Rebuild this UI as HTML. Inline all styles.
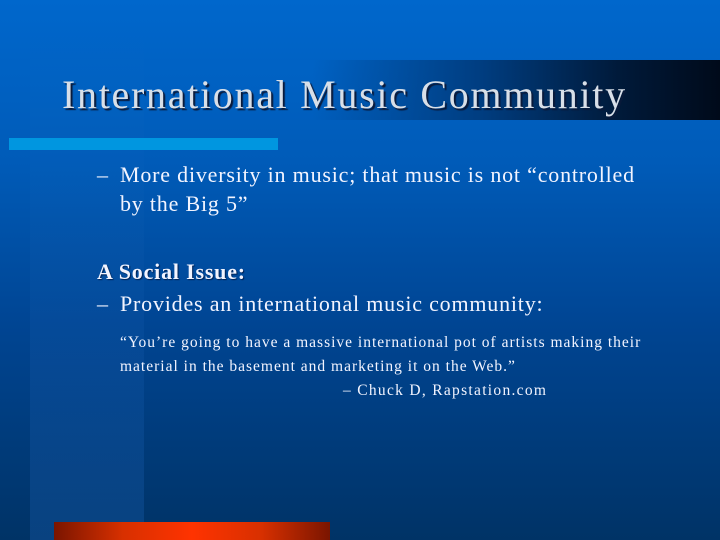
<!DOCTYPE html>
<html><head><meta charset="utf-8"><style>
html,body{margin:0;padding:0}
body{width:720px;height:540px;position:relative;overflow:hidden;background:linear-gradient(180deg,#0067cc 0%,#005bb8 30%,#004593 60%,#003366 100%);font-family:"Liberation Serif",serif;}
.strip{position:absolute;left:30px;top:0;width:114px;height:540px;background:linear-gradient(180deg,rgba(255,255,255,0) 0%,rgba(255,255,255,0.01) 40%,rgba(40,120,220,0.22) 100%);}
.bar{position:absolute;left:40px;top:60px;width:680px;height:60px;background:linear-gradient(90deg,rgba(0,102,204,0) 0%,rgba(0,102,204,0) 40%,#003d80 65%,#001a3a 85%,#000a1a 100%);}
.lb{position:absolute;left:9px;top:138px;width:269px;height:12px;background:#0096e0;}
.ob{position:absolute;left:54px;top:522px;width:276px;height:18px;background:linear-gradient(90deg,#7a1500 0%,#d83000 25%,#ff3300 50%,#d83000 75%,#7a1500 100%);}
.t{position:absolute;white-space:nowrap;color:#f2f4ff;}
.d{position:absolute;left:-23px}
h1{position:absolute;margin:0;left:62px;top:71px;font-weight:normal;font-size:40px;letter-spacing:1.7px;color:#d8dfe8;text-shadow:2px 2px 1px #0a1a3a;white-space:nowrap;}
.b{font-size:22px;letter-spacing:0.8px}
.q{font-size:15.5px;letter-spacing:1px}
</style></head><body>
<div class="strip"></div>
<div class="bar"></div>
<h1>International Music Community</h1>
<div class="lb"></div>
<div class="t b" style="left:120px;top:162px"><span class="d">–</span>More diversity in music; that music is not “controlled</div>
<div class="t b" style="left:120px;top:191px">by the Big 5”</div>
<div class="t b" style="left:97px;top:259px;font-weight:bold;text-shadow:1px 1px 1px #002050">A Social Issue:</div>
<div class="t b" style="left:120px;top:291px"><span class="d">–</span>Provides an international music community:</div>
<div class="t q" style="left:120px;top:334px">“You’re going to have a massive international pot of artists making their</div>
<div class="t q" style="left:120px;top:358px">material in the basement and marketing it on the Web.”</div>
<div class="t q" style="left:343px;top:382px;letter-spacing:1.3px">– Chuck D, Rapstation.com</div>
<div class="ob"></div>
</body></html>
